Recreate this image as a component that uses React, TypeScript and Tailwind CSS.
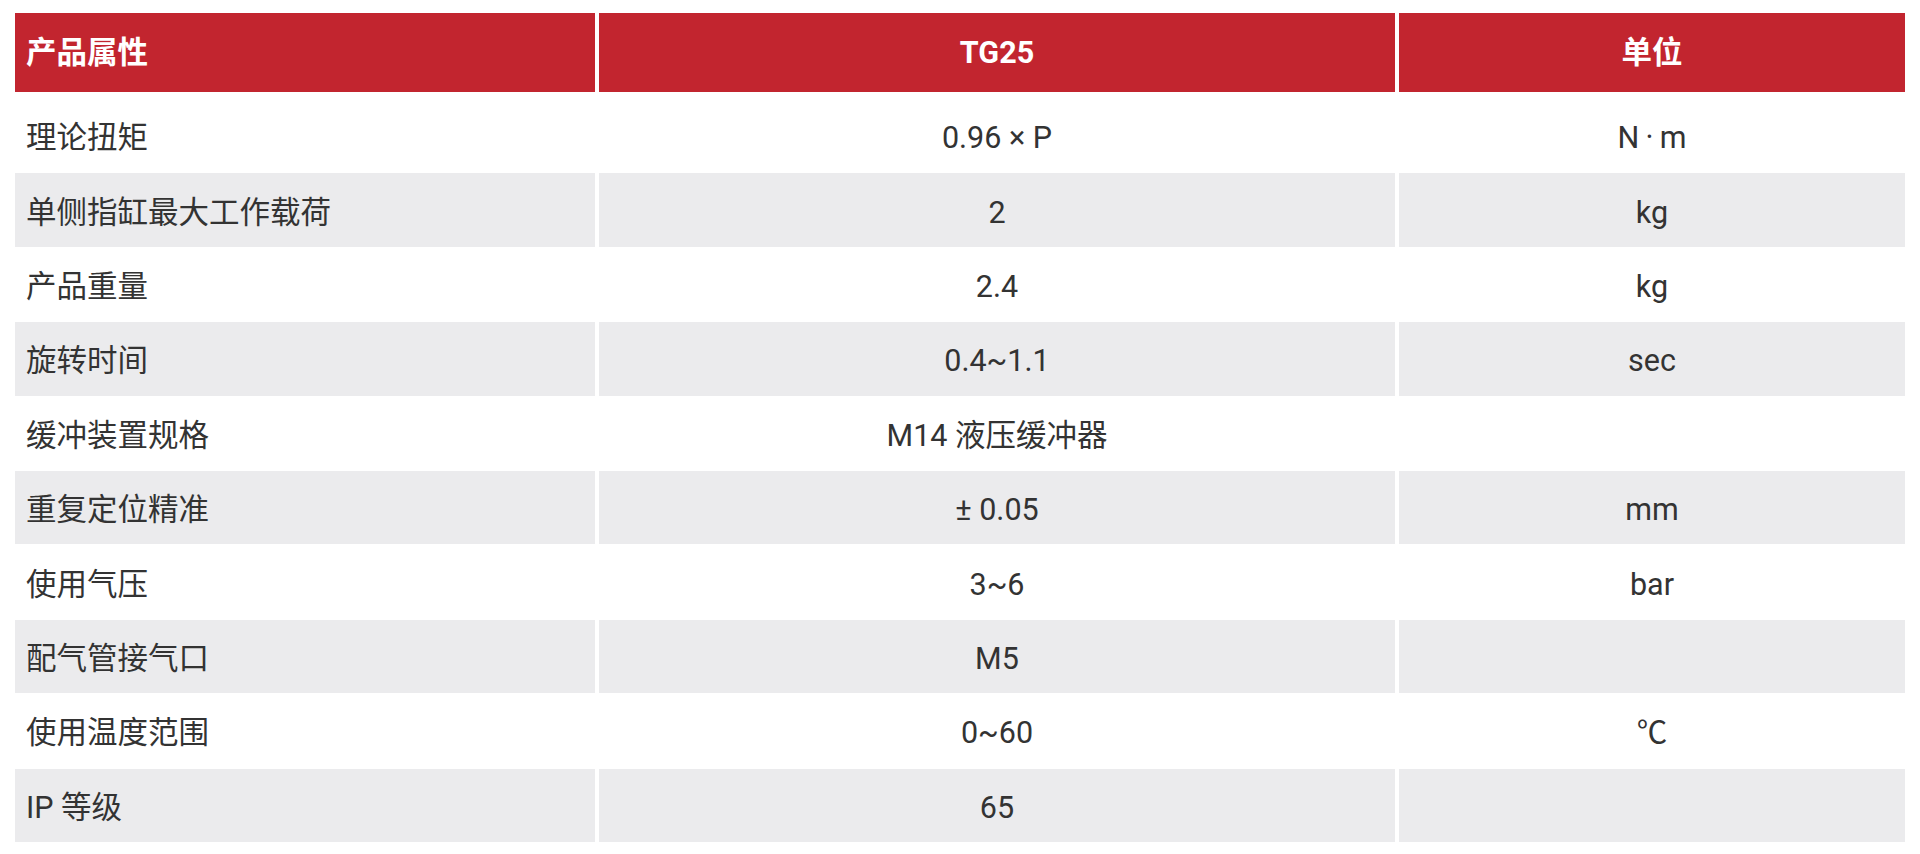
import React from "react"

type Row = {
  name: string
  value: string
  unit: string
}

const rows: Row[] = [
  { name: "理论扭矩", value: "0.96 × P", unit: "N\u2009·\u2009m" },
  { name: "单侧指缸最大工作载荷", value: "2", unit: "kg" },
  { name: "产品重量", value: "2.4", unit: "kg" },
  { name: "旋转时间", value: "0.4~1.1", unit: "sec" },
  { name: "缓冲装置规格", value: "M14 液压缓冲器", unit: "" },
  { name: "重复定位精准", value: "± 0.05", unit: "mm" },
  { name: "使用气压", value: "3~6", unit: "bar" },
  { name: "配气管接气口", value: "M5", unit: "" },
  { name: "使用温度范围", value: "0~60", unit: "℃" },
  { name: "IP 等级", value: "65", unit: "" },
]

const cols = "grid grid-cols-[580px_796px_506px] gap-x-[4px]"

export default function App() {
  return (
    <div
      className="min-h-[854px] bg-white px-[15px] pt-[13px] text-[30.5px] text-[#333333]"
      style={{ fontFamily: 'Roboto, "Noto Sans CJK SC", sans-serif' }}
    >
      {/* 表头 */}
      <div className={`${cols} h-[79px] font-bold text-white`}>
        <div className="flex items-center bg-[#c2252f] pl-[11px]">产品属性</div>
        <div className="flex items-center justify-center bg-[#c2252f]">TG25</div>
        <div className="flex items-center justify-center bg-[#c2252f]">单位</div>
      </div>

      {/* 参数行 */}
      <div className="mt-[7px] flex flex-col gap-y-[1px]">
        {rows.map((row, i) => {
          const bg = i % 2 === 1 ? "bg-[#ebebed]" : "bg-white"
          return (
            <div key={row.name} className={`${cols} h-[73.4px]`}>
              <div className={`flex items-center pl-[11px] pt-[5px] ${bg}`}>{row.name}</div>
              <div className={`flex items-center justify-center pt-[5px] ${bg}`}>{row.value}</div>
              <div className={`flex items-center justify-center pt-[5px] ${bg}`}>{row.unit}</div>
            </div>
          )
        })}
      </div>
    </div>
  )
}
